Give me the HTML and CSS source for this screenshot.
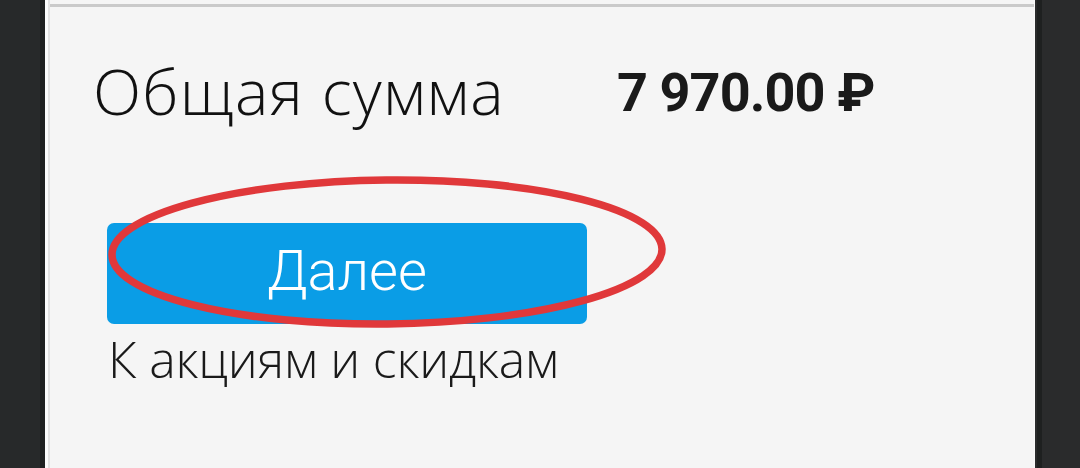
FILE: index.html
```html
<!DOCTYPE html>
<html lang="ru">
<head>
<meta charset="utf-8">
<title>Итого</title>
<link rel="stylesheet" href="styles.css">
</head>
<body>
<div class="frame">
  <div class="side side-left"><div class="edge"></div></div>
  <main class="panel">
    <div class="rule"></div>
    <div class="total-row">
      <span class="label">Общая сумма</span>
      <span class="amount">7 970.00 ₽</span>
    </div>
    <div class="actions">
      <button class="next" type="button">Далее</button>
      <svg class="mark" width="580" height="166" viewBox="0 0 580 166" aria-hidden="true">
        <ellipse cx="287" cy="82" rx="275" ry="72" fill="none" stroke="#e0383a" stroke-width="7.5" transform="rotate(-0.6 287 82)"/>
      </svg>
    </div>
    <a class="promo" href="#">К акциям и скидкам</a>
  </main>
  <div class="side side-right"><div class="edge"></div></div>
</div>
</body>
</html>
```
FILE: styles.css
```css
html, body {
  margin: 0;
  padding: 0;
  height: 100%;
  background: #27292a;
}
.frame {
  display: flex;
  width: 1080px;
  height: 468px;
  overflow: hidden;
}
.side {
  display: flex;
  background: #27292a;
}
.side-left {
  width: 45px;
  justify-content: flex-end;
}
.side-right {
  width: 45px;
  background: #2a2b2c;
  justify-content: flex-start;
  border-left: 1px solid #fafafa;
}
.side .edge {
  width: 5px;
  background: #1e2020;
}
.side-right .edge {
  margin-left: 2px;
}
.panel {
  flex: 1;
  display: flex;
  flex-direction: column;
  align-items: flex-start;
  background: #f5f5f5;
  border-left: 3px solid #fbfbfb;
  box-shadow: inset 2px 0 0 #e1e1e1;
  padding-left: 2px;
  padding-top: 4px;
}
.rule {
  align-self: stretch;
  height: 3px;
  background: #cacaca;
}
.total-row {
  display: flex;
  align-items: flex-start;
  margin-top: 49px;
  margin-left: 43px;
}
.label {
  font-family: "Open Sans", sans-serif;
  font-weight: 300;
  font-size: 63px;
  line-height: 70px;
  letter-spacing: 1.2px;
  color: #111;
}
.amount {
  font-family: Roboto, "Liberation Sans", sans-serif;
  font-weight: 700;
  font-size: 54px;
  line-height: 60px;
  letter-spacing: -0.9px;
  color: #1a1a1a;
  margin-left: 112px;
  margin-top: 7px;
}
.actions {
  position: relative;
  margin-top: 97px;
  margin-left: 57px;
}
.next {
  display: block;
  width: 480px;
  height: 101px;
  border: 0;
  border-radius: 7px;
  background: #0a9de6;
  color: #fff;
  font-family: Roboto, sans-serif;
  font-weight: 300;
  font-size: 56px;
  line-height: 60px;
  padding: 0 0 6px;
  margin: 0;
}
.mark {
  position: absolute;
  left: -7px;
  top: -53px;
  pointer-events: none;
}
.promo {
  margin-top: 5px;
  margin-left: 58px;
  font-family: "Open Sans", sans-serif;
  font-weight: 300;
  font-size: 50px;
  line-height: 60px;
  letter-spacing: -0.2px;
  color: #1a1a1a;
  text-decoration: none;
}
```
